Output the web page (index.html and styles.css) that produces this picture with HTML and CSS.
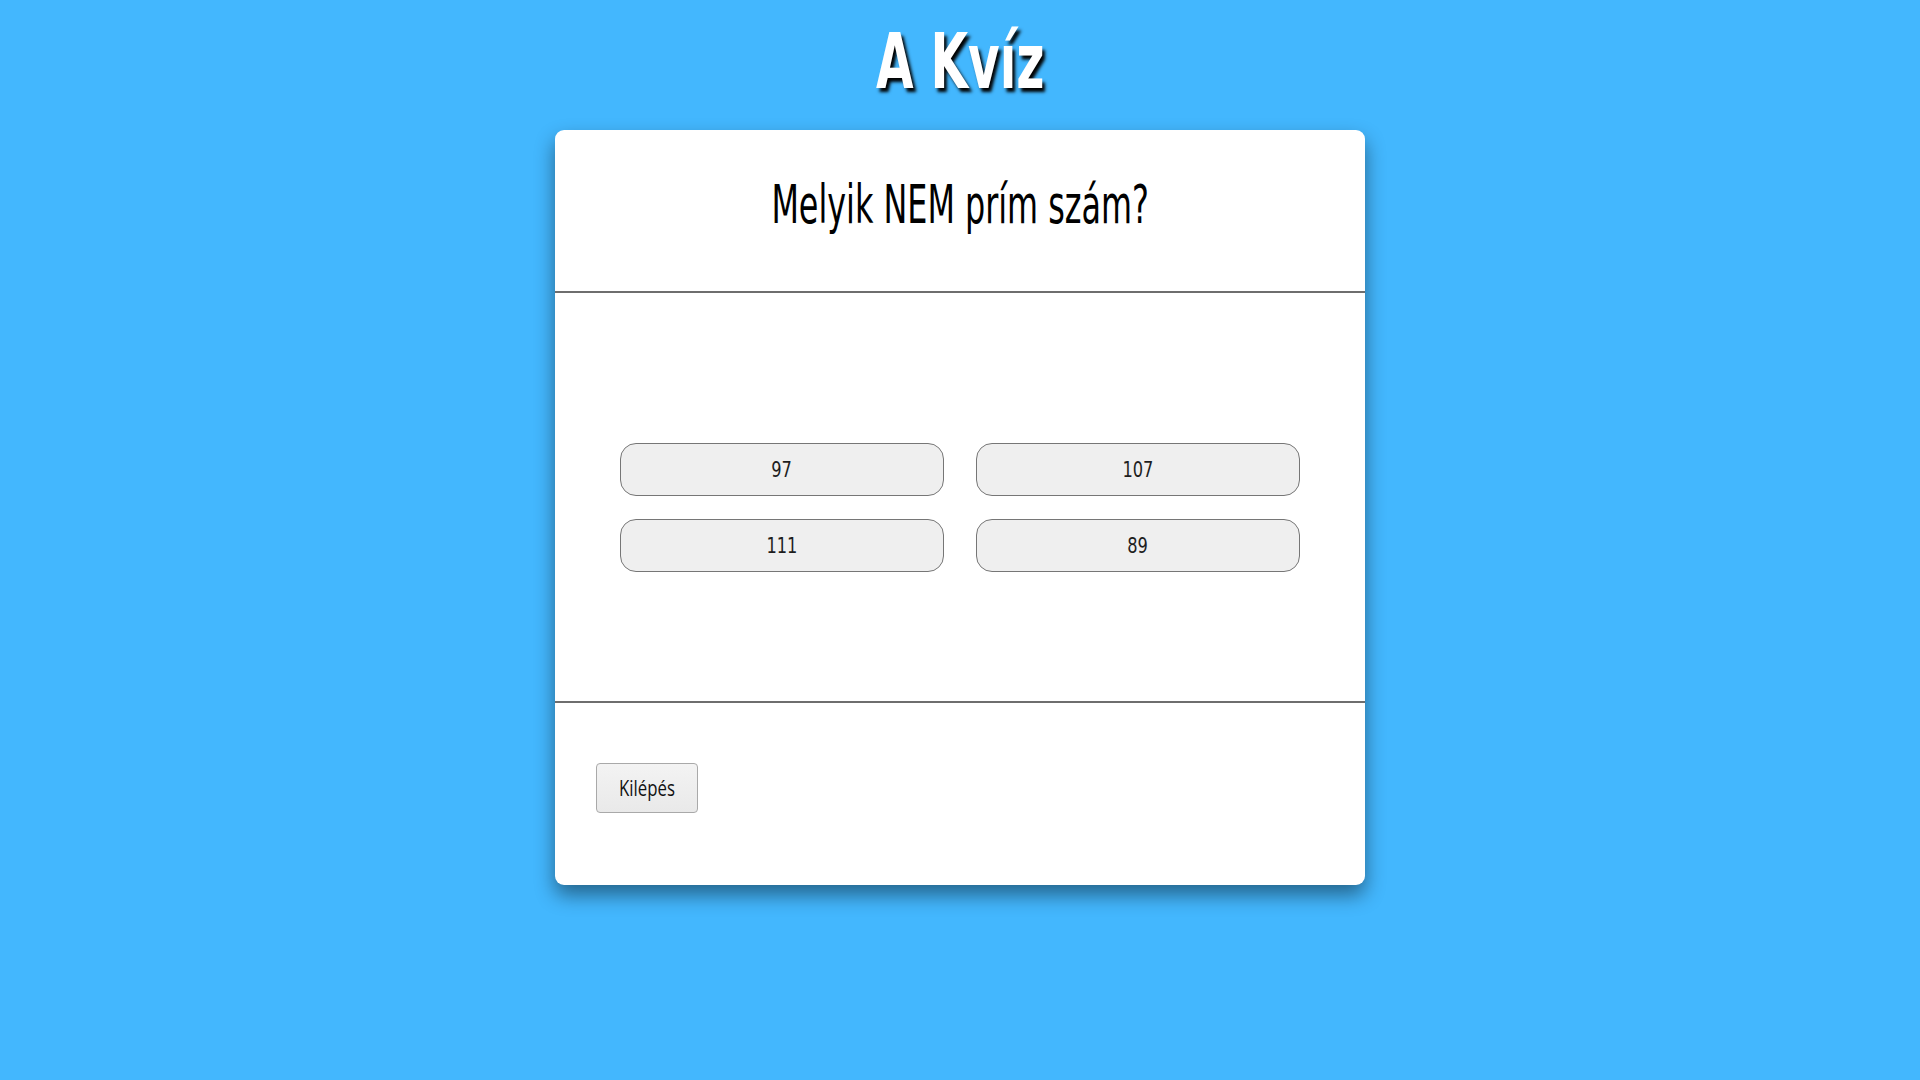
FILE: index.html
```html
<!DOCTYPE html>
<html lang="hu">
<head>
<meta charset="utf-8">
<title>A Kvíz</title>
<link rel="stylesheet" href="styles.css">
</head>
<body>
<main class="page">
  <h1 class="title"><span class="title-text">A Kvíz</span></h1>
  <section class="card">
    <header class="card-head">
      <h2 class="question"><span class="question-text">Melyik NEM prím szám?</span></h2>
    </header>
    <div class="answers">
      <button class="answer"><span class="answer-text">97</span></button>
      <button class="answer"><span class="answer-text">107</span></button>
      <button class="answer"><span class="answer-text">111</span></button>
      <button class="answer"><span class="answer-text">89</span></button>
    </div>
    <footer class="card-foot">
      <button class="exit"><span class="exit-text">Kilépés</span></button>
    </footer>
  </section>
</main>
</body>
</html>
```

FILE: styles.css
```css
html, body {
  margin: 0;
  padding: 0;
}

body {
  background: #43b7fe;
  min-height: 1080px;
  font-family: "DejaVu Sans Condensed", "DejaVu Sans", sans-serif;
  font-stretch: condensed;
}

.page {
  display: flex;
  flex-direction: column;
  align-items: center;
  padding-top: 12px;
}

.title {
  margin: 0 0 18px 0;
  height: 100px;
  font-size: 77px;
  line-height: 100px;
  font-weight: bold;
  color: #ffffff;
  text-shadow: 4px 4px 4px #000000;
  text-align: center;
}

.title-text {
  display: inline-block;
  transform: scaleX(0.7);
}

.card {
  width: 810px;
  height: 755px;
  box-sizing: border-box;
  background: #ffffff;
  border-radius: 9px;
  box-shadow: 0 10px 20px rgba(0, 0, 0, 0.45);
  display: flex;
  flex-direction: column;
}

.card-head {
  height: 163px;
  box-sizing: border-box;
  padding-top: 45px;
  border-bottom: 2px solid #6e6e6e;
  text-align: center;
}

.question {
  margin: 0;
  font-size: 54px;
  line-height: 60px;
  font-weight: normal;
  color: #000000;
}

.question-text {
  display: inline-block;
  transform: scaleX(0.655);
  white-space: nowrap;
}

.answers {
  height: 408px;
  box-sizing: border-box;
  padding: 150px 0 0 65px;
  display: grid;
  grid-template-columns: 324px 324px;
  grid-auto-rows: 53px;
  column-gap: 32px;
  row-gap: 23px;
  align-content: start;
}

.answer {
  margin: 0;
  padding: 0;
  background: #efefef;
  border: 1px solid #767676;
  border-radius: 16px;
  font-family: "DejaVu Sans Condensed", "DejaVu Sans", sans-serif;
  font-stretch: condensed;
  font-size: 22px;
  color: #1e1e1e;
}

.answer-text {
  display: inline-block;
  transform: scaleX(0.82);
}

.card-foot {
  flex: 1;
  border-top: 2px solid #6e6e6e;
  padding: 60px 0 0 41px;
}

.exit {
  width: 102px;
  height: 50px;
  margin: 0;
  padding: 0;
  background: linear-gradient(#f3f3f3, #e9e9e9);
  border: 1px solid #a9a9a9;
  border-radius: 4px;
  font-family: "Open Sans", sans-serif;
  font-size: 21px;
  color: #111111;
}

.exit-text {
  display: inline-block;
  transform: scaleX(0.8);
}
```
